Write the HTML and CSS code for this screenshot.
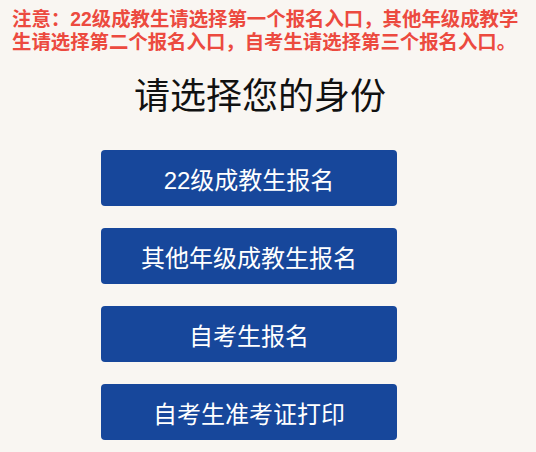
FILE: index.html
```html
<!DOCTYPE html>
<html lang="zh-CN">
<head>
<meta charset="utf-8">
<title>请选择您的身份</title>
<link rel="stylesheet" href="styles.css">
</head>
<body>
<div class="page">
  <p class="notice">注意：22级成教生请选择第一个报名入口，其他年级成教学生请选择第二个报名入口，自考生请选择第三个报名入口。</p>
  <h1 class="title">请选择您的身份</h1>
  <div class="buttons">
    <a class="btn" href="#">22级成教生报名</a>
    <a class="btn" href="#">其他年级成教生报名</a>
    <a class="btn" href="#">自考生报名</a>
    <a class="btn" href="#">自考生准考证打印</a>
  </div>
</div>
</body>
</html>
```
FILE: styles.css
```css
html, body {
  margin: 0;
  padding: 0;
  background: #f9f6f2;
}
body {
  font-family: "Liberation Sans", "Noto Sans CJK SC", sans-serif;
  width: 536px;
  height: 452px;
  overflow: hidden;
}
.page {
  display: flex;
  flex-direction: column;
}
.notice {
  margin: 0;
  padding: 8px 12px 0 12px;
  font-size: 19.4px;
  line-height: 23px;
  font-weight: bold;
  color: #ec4a3f;
}
.title {
  margin: 18px 16px 0 0;
  font-size: 36px;
  line-height: 50px;
  font-weight: normal;
  color: #111;
  text-align: center;
}
.buttons {
  display: flex;
  flex-direction: column;
  gap: 22px;
  margin: 28px 0 0 101px;
}
.btn {
  display: flex;
  align-items: center;
  justify-content: center;
  width: 296px;
  height: 56px;
  background: #17479b;
  border-radius: 4px;
  color: #fff;
  font-size: 24px;
  text-decoration: none;
}
```
